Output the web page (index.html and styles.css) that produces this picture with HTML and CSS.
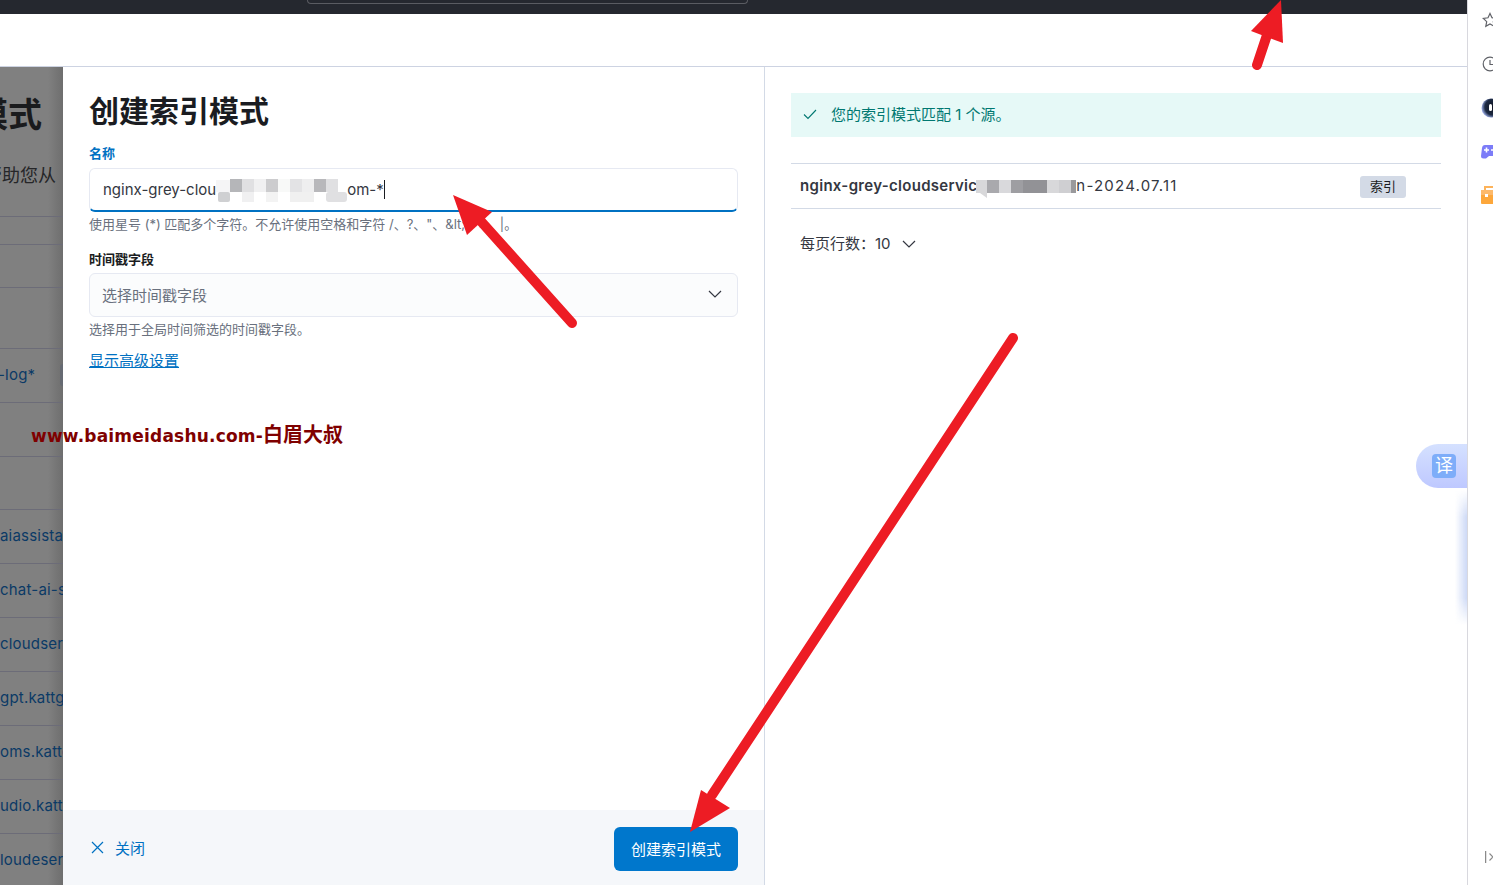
FILE: index.html
```html
<!DOCTYPE html>
<html lang="zh">
<head>
<meta charset="utf-8">
<title>创建索引模式</title>
<link rel="stylesheet" href="styles.css">
</head>
<body>
<div class="page">
  <div class="main">
    <div class="topbar"><div class="urlbox"></div></div>
    <div class="subbar"></div>
    <div class="workspace">
      <div class="backdrop">
        <div class="bg-title">模式</div>
        <div class="bg-desc">帮助您从</div>
        <div class="bg-row h-a"></div>
        <div class="bg-row h-b"></div>
        <div class="bg-row h-c"></div>
        <div class="bg-row"><span class="bg-log">-log*</span><i class="bg-chip"></i></div>
        <div class="bg-row"></div>
        <div class="bg-row h-d"></div>
        <div class="bg-row"><span>aiassistant</span></div>
        <div class="bg-row"><span>chat-ai-service</span></div>
        <div class="bg-row"><span>cloudservice</span></div>
        <div class="bg-row"><span>gpt.kattgpt</span></div>
        <div class="bg-row"><span>oms.kattgpt</span></div>
        <div class="bg-row"><span>udio.kattgpt</span></div>
        <div class="bg-row"><span>loudeservice</span></div>
      </div>
      <div class="flyout">
        <section class="form-pane">
          <div class="form-body">
            <h1 class="form-title">创建索引模式</h1>
            <label class="label label-active">名称</label>
            <div class="input input-focus">
              <span>nginx-grey-clou</span>
              <svg class="mosaic" width="131" height="23" viewBox="0 0 131 23">
                <rect x="0" y="1" width="14" height="12" fill="#f5f5f6"/>
                <rect x="14" y="0" width="12" height="13" fill="#b5b6b9"/>
                <rect x="26" y="0" width="12" height="13" fill="#e0e0e2"/>
                <rect x="38" y="0" width="12" height="13" fill="#f0f0f1"/>
                <rect x="50" y="0" width="12" height="13" fill="#ccccce"/>
                <rect x="62" y="0" width="12" height="13" fill="#f8f9f8"/>
                <rect x="74" y="0" width="12" height="13" fill="#e3e3e5"/>
                <rect x="86" y="0" width="12" height="13" fill="#eeeeef"/>
                <rect x="98" y="0" width="12" height="13" fill="#b8b8bb"/>
                <rect x="110" y="0" width="12" height="13" fill="#e0e0e2"/>
                <rect x="2" y="13" width="12" height="10" rx="2" fill="#cfd0d2"/>
                <rect x="26" y="13" width="12" height="10" fill="#f0f0f1"/>
                <rect x="50" y="13" width="12" height="10" fill="#f3f3f3"/>
                <rect x="74" y="13" width="24" height="10" fill="#f0f0f0"/>
                <rect x="110" y="13" width="21" height="10" rx="3" fill="#e0e0e2"/>
              </svg>
              <span>om-*</span><i class="caret"></i>
            </div>
            <p class="help">使用星号 (*) 匹配多个字符。不允许使用空格和字符 /、?、"、&amp;lt;、&gt;、|。</p>
            <label class="label label-second">时间戳字段</label>
            <div class="input input-select">
              <span>选择时间戳字段</span>
              <svg class="chevron" width="14" height="8" viewBox="0 0 14 8"><path d="M1 1l6 6 6-6" fill="none" stroke="#343741" stroke-width="1.2"/></svg>
            </div>
            <p class="help">选择用于全局时间筛选的时间戳字段。</p>
            <a class="link">显示高级设置</a>
          </div>
          <footer class="form-footer">
            <a class="close">
              <svg width="13" height="13" viewBox="0 0 13 13"><path d="M1 1l11 11M12 1L1 12" fill="none" stroke="#0071c2" stroke-width="1.2"/></svg>
              <span>关闭</span>
            </a>
            <button class="primary">创建索引模式</button>
          </footer>
        </section>
        <section class="preview-pane">
          <div class="callout">
            <svg width="14" height="11" viewBox="0 0 14 11"><path d="M1 5.5l4 4 8-8.5" fill="none" stroke="#007871" stroke-width="1.1"/></svg>
            <span>您的索引模式匹配 1 个源。</span>
          </div>
          <div class="match-row">
            <div class="match-name">
              <b>nginx-grey-cloudservic</b>
              <svg class="mosaic-small" width="100" height="18" viewBox="0 0 100 18">
                <rect x="0" y="0" width="11" height="13" fill="#d8d8da"/>
                <path d="M4 13h7v5z" fill="#d8d8da"/>
                <rect x="11" y="0" width="12" height="13" fill="#a9a9ad"/>
                <rect x="23" y="0" width="12" height="13" fill="#d9d9dc"/>
                <rect x="35" y="0" width="12" height="13" fill="#9e9ea2"/>
                <rect x="47" y="0" width="24" height="13" fill="#929296"/>
                <rect x="71" y="0" width="12" height="13" fill="#d8d8da"/>
                <rect x="83" y="0" width="12" height="13" fill="#cfcfd2"/>
                <rect x="95" y="0" width="5" height="13" fill="#99999c"/>
              </svg>
              <span class="match-date">n-2024.07.11</span>
            </div>
            <span class="badge">索引</span>
          </div>
          <div class="pager">
            <span>每页行数：10</span>
            <svg width="14" height="8" viewBox="0 0 14 8"><path d="M1 1l6 6 6-6" fill="none" stroke="#343741" stroke-width="1.2"/></svg>
          </div>
        </section>
      </div>
    </div>
  </div>
  <aside class="strip">
    <svg class="strip-icon" width="16" height="16" viewBox="0 0 16 16"><path d="M8 1.5l2 4.3 4.7.6-3.4 3.2.9 4.7L8 12l-4.2 2.3.9-4.7L1.300 6.400 6 5.800z" fill="none" stroke="#606268" stroke-width="1.2"/></svg>
    <svg class="strip-icon" width="16" height="16" viewBox="0 0 16 16"><circle cx="8" cy="8" r="6.800" fill="none" stroke="#606268" stroke-width="1.2"/><path d="M8 4v4.500h3" fill="none" stroke="#606268" stroke-width="1.2"/></svg>
    <svg class="strip-icon" width="16" height="20" viewBox="0 0 16 20"><defs><radialGradient id="orb" cx="60%" cy="45%" r="60%"><stop offset="0" stop-color="#10131f"/><stop offset=".7" stop-color="#1d2a44"/><stop offset="1" stop-color="#9fb0e8"/></radialGradient></defs><circle cx="10" cy="10" r="9.500" fill="url(#orb)"/><rect x="8" y="6" width="3" height="7" rx="1.500" fill="#fff"/></svg>
    <svg class="strip-icon" width="16" height="16" viewBox="0 0 16 16"><path d="M4 1h12v11H8l-3 2.500H2.500Q0 14.500 0 12L1 4q.4-3 3-3z" fill="#7c7cf8"/><path d="M3 6h5M5.500 3.500v5" stroke="#fff" stroke-width="1.600"/><circle cx="11" cy="6" r="1" fill="#fff"/></svg>
    <svg class="strip-icon" width="16" height="20" viewBox="0 0 16 20"><rect x="0" y="5" width="16" height="14" rx="1" fill="#fda73b"/><path d="M4 5V2h12" fill="none" stroke="#fdb35a" stroke-width="2"/><rect x="0" y="5" width="16" height="5" fill="#fdb96a"/><rect x="4" y="9" width="3" height="3" fill="#fff"/></svg>
    <svg class="strip-bottom" width="8" height="12" viewBox="0 0 8 12"><path d="M.5 0v12" stroke="#8a8a8a" stroke-width="1.500"/><path d="M4.500 2.500L8 6 4.500 9.500" fill="none" stroke="#8a8a8a" stroke-width="1.200"/></svg>
  </aside>
</div>

<div class="watermark">www.baimeidashu.com-<span class="watermark-cjk">白眉大叔</span></div>
<div class="translate"><span class="translate-icon">译</span></div>
<div class="edge-glow"></div>

<svg class="arrows" width="1493" height="885" viewBox="0 0 1493 885">
  <g fill="#ed1c24" stroke="#ed1c24" stroke-linecap="round">
    <path d="M1257 65L1268 32" stroke-width="10" fill="none"/>
    <path d="M1281 0L1251 31 1283 43z" stroke-width="0"/>
    <path d="M572 323L478 218" stroke-width="10" fill="none"/>
    <path d="M453 195L492 212 467 235z" stroke-width="0"/>
    <path d="M1013 338L712 795" stroke-width="10" fill="none"/>
    <path d="M690 832L701 790 730 808z" stroke-width="0"/>
  </g>
</svg>
</body>
</html>
```

FILE: styles.css
```css
* { box-sizing: border-box; }
html, body { margin: 0; height: 100%; overflow: hidden; background: #fff; }
body { font-family: Inter, "Noto Sans CJK SC", sans-serif; color: #343741; font-size: 15px; }

.page { display: flex; width: 1493px; height: 885px; }
.main { width: 1467px; display: flex; flex-direction: column; }

.topbar { height: 14px; background: #25282f; padding-left: 307px; flex: none; }
.urlbox { width: 441px; height: 4px; border: 1px solid #5a5c62; border-top: 0; border-radius: 0 0 5px 5px; }
.subbar { height: 53px; flex: none; border-bottom: 1px solid #cdd3e2; background: #fff; }
.workspace { flex: 1; display: flex; min-height: 0; }

.backdrop { width: 63px; flex: none; overflow: hidden; background: linear-gradient(90deg, #808080 0, #808080 48px, #6e6e6e 63px); color: #0b3a66; }
.bg-title { font-size: 34px; font-weight: 700; line-height: 40px; color: #1a1b1d; margin: 28px 0 0 -26px; white-space: nowrap; }
.bg-desc { font-size: 18px; line-height: 24px; color: #262628; margin: 29px 0 0 -16px; white-space: nowrap; height: 52px; }
.bg-row { height: 54px; border-top: 1px solid #6c6c78; display: flex; align-items: center; white-space: nowrap; overflow: hidden; font-size: 15px; letter-spacing: .2px; padding-bottom: 2px; }
.bg-row.h-a { height: 28px; }
.bg-row.h-b { height: 43px; }
.bg-row.h-c { height: 61px; }
.bg-row.h-d { height: 53px; }
.bg-log { margin-left: -2px; }
.bg-chip { display: block; flex: none; width: 30px; height: 22px; border-radius: 3px; background: #666a72; margin-left: 25px; }

.flyout { width: 1404px; flex: none; display: flex; background: #fff; }
.form-pane { width: 702px; flex: none; display: flex; flex-direction: column; border-right: 1px solid #d3dae6; }
.form-body { flex: 1; padding: 26px 26px 0 26px; }
.form-title { margin: 0 0 16px; font-size: 30px; line-height: 36px; font-weight: 700; color: #1a1c21; }
.label { display: block; font-size: 13px; line-height: 16px; font-weight: 700; color: #1a1c21; }
.label-active { color: #0071c2; }
.label-second { margin-top: 18px; }
.input { height: 44px; margin-top: 6px; border: 1px solid #e6e9f2; border-radius: 6px; display: flex; align-items: center; padding-left: 13px; font-size: 15px; }
.input-focus { background: #fff; border-bottom: 2px solid #0071c2; color: #343741; margin-top: 7px; }
.mosaic { flex: none; margin-top: 2px; }
.caret { display: block; width: 1px; height: 19px; background: #1a1c21; }
.input-select { background: #fbfcfd; color: #69707d; justify-content: space-between; padding: 0 15px 2px 12px; }
.help { margin: 3px 0 0; font-size: 13px; line-height: 18px; color: #69707d; white-space: nowrap; }
.link { display: block; margin-top: 13px; font-size: 15px; line-height: 20px; color: #0071c2; text-decoration: underline; }

.form-footer { height: 75px; flex: none; background: #f5f7fa; display: flex; align-items: center; justify-content: space-between; padding: 3px 26px 0 28px; }
.close { display: flex; align-items: center; gap: 11px; color: #0071c2; font-size: 15px; margin-bottom: 3px; }
.primary { width: 124px; height: 44px; border: 0; border-radius: 6px; background: #0077cc; color: #fff; font: inherit; font-size: 15px; padding: 0 0 2px; }

.preview-pane { width: 702px; flex: none; padding: 26px 0 0 26px; }
.callout { width: 650px; height: 44px; background: #e6f9f7; color: #007871; display: flex; align-items: center; gap: 14px; padding: 0 0 4px 12px; font-size: 15px; }
.callout svg { margin-top: 2px; }
.match-row { width: 650px; height: 46px; margin-top: 26px; border-top: 1px solid #d3dae6; border-bottom: 1px solid #d3dae6; display: flex; align-items: center; padding-left: 9px; }
.match-name { display: flex; align-items: center; width: 560px; flex: none; white-space: nowrap; margin-top: -2px; }
.match-name b { font-weight: 600; letter-spacing: .3px; }
.match-date { letter-spacing: 1.2px; }
.mosaic-small { flex: none; margin-top: 7px; margin-left: -1px; }
.badge { width: 46px; height: 22px; border-radius: 3px; background: #d3dae6; color: #1a1c21; font-size: 13px; line-height: 20px; text-align: center; margin-top: 1px; }
.pager { display: flex; align-items: center; gap: 11px; margin-top: 24px; padding-left: 9px; line-height: 22px; }

.strip { width: 26px; flex: none; border-left: 1px solid #d8d8de; padding: 12px 0 20px 14px; display: flex; flex-direction: column; overflow: hidden; background: #fff; }
.strip-icon { flex: none; margin-bottom: 28px; }
.strip-icon:nth-child(3) { margin-left: -1px; margin-bottom: 26px; margin-top: -2px; }
.strip-icon:nth-child(4) { margin-left: -1px; margin-bottom: 25px; }
.strip-icon:nth-child(5) { margin-left: -1px; }
.strip-bottom { flex: none; margin-top: auto; margin-left: 3px; margin-bottom: 2px; }

.watermark { position: absolute; left: 31px; top: 424px; font-family: "DejaVu Sans", "Noto Sans CJK SC", sans-serif; font-size: 17px; line-height: 22px; font-weight: 700; letter-spacing: .2px; color: #7f0000; white-space: nowrap; }
.watermark-cjk { font-size: 20px; letter-spacing: 0; }
.translate { position: absolute; left: 1416px; top: 444px; width: 51px; height: 44px; border-radius: 22px 0 0 22px; background: linear-gradient(180deg, #d5e1ff, #bec8ff); display: flex; align-items: center; padding-left: 16px; }
.translate-icon { width: 24px; height: 24px; border-radius: 4px; background: #7eadf9; color: #fff; font-size: 18px; line-height: 24px; text-align: center; }
.edge-glow { position: absolute; left: 1455px; top: 490px; width: 12px; height: 135px; background: linear-gradient(90deg, rgba(205,217,246,0), #cdd9f6); -webkit-mask-image: linear-gradient(180deg, transparent, #000 20%, #000 80%, transparent); mask-image: linear-gradient(180deg, transparent, #000 20%, #000 80%, transparent); }
.arrows { position: absolute; left: 0; top: 0; pointer-events: none; }
```
